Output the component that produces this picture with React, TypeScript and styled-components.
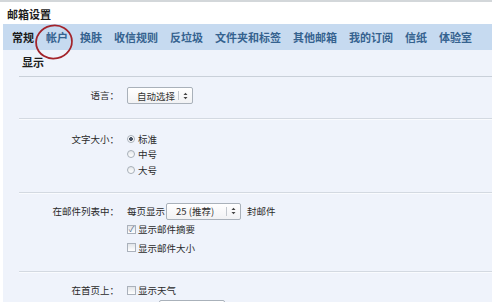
import React from 'react'
import styled, { createGlobalStyle } from 'styled-components'

const GlobalStyle = createGlobalStyle`
  html, body {
    margin: 0;
    padding: 0;
    background: #ffffff;
    overflow: hidden;
  }
  body {
    font-family: "Noto Sans CJK SC", "Noto Sans", sans-serif;
    color: #222;
  }
`

const Page = styled.div`
  width: 492px;
  height: 302px;
  border-top: 2px solid #d3d7da;
  box-sizing: border-box;
  overflow: hidden;
`

const Title = styled.div`
  height: 22px;
  padding-left: 7px;
  font-size: 11px;
  font-weight: 700;
  line-height: 24px;
  color: #1d1d1d;
`

const Frame = styled.div`
  margin-left: 3px;
  position: relative;
`

const TabBar = styled.div`
  height: 26px;
  background: #c6daf0;
  display: flex;
  align-items: center;
  padding-left: 3px;
`

const Tab = styled.div<{ $active?: boolean }>`
  padding: 0 6px;
  font-size: 11px;
  font-weight: 700;
  line-height: 26px;
  white-space: nowrap;
  color: ${p => (p.$active ? '#1b1b1b' : '#35628f')};
`

const Circle = styled.svg`
  position: absolute;
  left: 30px;
  top: -1px;
  pointer-events: none;
`

const Content = styled.div`
  background: #eff3fb;
  padding-left: 16px;
  height: 260px;
`

const SectionHead = styled.div`
  height: 26px;
  padding-left: 3px;
  font-size: 11px;
  font-weight: 700;
  line-height: 24px;
  color: #1d1d1d;
  border-bottom: 1px solid #c9d0d9;
`

const Row = styled.div<{ $top?: number; $bottom?: number }>`
  display: flex;
  align-items: flex-start;
  padding: ${p => p.$top ?? 11}px 0 ${p => p.$bottom ?? 13}px;
  border-bottom: 1px solid #d3d9e1;
  box-shadow: 0 1px 0 #f9fbfe;
`

const Label = styled.div`
  width: 100px;
  flex: none;
  text-align: right;
  font-size: 9.5px;
  line-height: 17px;
  color: #2a2a2a;
  white-space: nowrap;
`

const Controls = styled.div`
  margin-left: 8px;
  display: flex;
  flex-direction: column;
  font-size: 9.5px;
  color: #2a2a2a;
`

const Line = styled.div<{ $h?: number }>`
  display: flex;
  align-items: center;
  height: ${p => p.$h ?? 17}px;
  white-space: nowrap;
`

const Select = styled.div<{ $w: number }>`
  width: ${p => p.$w}px;
  height: 17px;
  box-sizing: border-box;
  border: 1px solid #a9b1ba;
  border-radius: 2px;
  background: linear-gradient(#ffffff, #f1f2f4);
  display: flex;
  align-items: center;
  font-size: 9.5px;
  color: #333;
`

const SelectText = styled.span`
  flex: 1;
  padding-left: 9px;
`

const SelectArrow = styled.span`
  width: 13px;
  height: 9px;
  border-left: 1px solid #c3c8ce;
  display: flex;
  justify-content: center;
  align-items: center;
`

const Radio = styled.span<{ $checked?: boolean }>`
  width: 8px;
  height: 8px;
  box-sizing: border-box;
  border-radius: 50%;
  border: 1px solid #a7afb8;
  background: ${p =>
    p.$checked ? 'radial-gradient(circle, #4a5566 0 1.6px, #ffffff 2.2px)' : 'linear-gradient(#e4e7ea, #ffffff)'};
  margin-right: 3px;
  flex: none;
`

const Check = styled.span<{ $checked?: boolean }>`
  width: 9px;
  height: 9px;
  box-sizing: border-box;
  border: 1px solid #aab1bb;
  background: linear-gradient(#e2e5e9, #ffffff);
  margin-right: 2px;
  flex: none;
  display: flex;
  align-items: center;
  justify-content: center;
  font-size: 8px;
  line-height: 1;
  color: #4b6585;
`

const Gap = styled.span<{ $w: number }>`
  display: inline-block;
  width: ${p => p.$w}px;
`

const tabs = ['常规', '帐户', '换肤', '收信规则', '反垃圾', '文件夹和标签', '其他邮箱', '我的订阅', '信纸', '体验室']

function Arrows() {
  return (
    <SelectArrow>
      <svg width="5" height="8" viewBox="0 0 5 8">
        <path d="M0.5 3 L2.5 0.8 L4.5 3 Z M0.5 5 L2.5 7.2 L4.5 5 Z" fill="#444" />
      </svg>
    </SelectArrow>
  )
}

export default function App() {
  return (
    <>
      <GlobalStyle />
      <Page>
        <Title>邮箱设置</Title>
        <Frame>
          <TabBar>
            {tabs.map((t, i) => (
              <Tab key={t} $active={i === 0}>
                {t}
              </Tab>
            ))}
          </TabBar>
          <Circle width="42" height="38" viewBox="0 0 42 38">
            <ellipse
              cx="21"
              cy="19"
              rx="18"
              ry="16.5"
              fill="none"
              stroke="#a3232a"
              strokeWidth="1.8"
              transform="rotate(-12 21 19)"
            />
          </Circle>
          <Content>
            <SectionHead>显示</SectionHead>
            <Row $top={10} $bottom={14}>
              <Label>语言：</Label>
              <Controls>
                <Line>
                  <Select $w={66}>
                    <SelectText>自动选择</SelectText>
                    <Arrows />
                  </Select>
                </Line>
              </Controls>
            </Row>
            <Row $top={12} $bottom={14}>
              <Label>文字大小：</Label>
              <Controls>
                <Line $h={15.5}>
                  <Radio $checked />
                  标准
                </Line>
                <Line $h={15.5}>
                  <Radio />
                  中号
                </Line>
                <Line $h={15.5}>
                  <Radio />
                  大号
                </Line>
              </Controls>
            </Row>
            <Row $top={10} $bottom={14}>
              <Label>在邮件列表中：</Label>
              <Controls>
                <Line>
                  每页显示
                  <Gap $w={1} />
                  <Select $w={75}>
                    <SelectText>25 (推荐)</SelectText>
                    <Arrows />
                  </Select>
                  <Gap $w={6} />
                  封邮件
                </Line>
                <Line $h={19}>
                  <Check $checked>✓</Check>
                  显示邮件摘要
                </Line>
                <Line $h={18}>
                  <Check />
                  显示邮件大小
                </Line>
              </Controls>
            </Row>
            <Row $top={10}>
              <Label>在首页上：</Label>
              <Controls>
                <Line>
                  <Check />
                  显示天气
                </Line>
                <Line $h={20}>
                  城市：
                  <Gap $w={3} />
                  <Select $w={66}>
                    <SelectText>北京</SelectText>
                    <Arrows />
                  </Select>
                </Line>
              </Controls>
            </Row>
          </Content>
        </Frame>
      </Page>
    </>
  )
}
